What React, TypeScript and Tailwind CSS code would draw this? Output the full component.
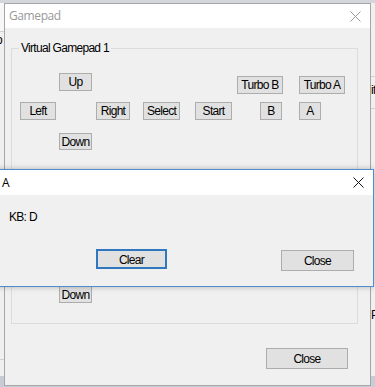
import React from 'react';

const ui = "font-['Liberation_Sans',Arial,sans-serif] text-[12px] tracking-[-0.7px] text-black";
const caption = "font-['Open_Sans','Noto_Sans',sans-serif] text-[12px] tracking-[-0.4px]";

type Pad = { label: string; x: number; y: number; w: number; h?: number };

// positions inside the group box (padding box)
const padButtons: Pad[] = [
  { label: 'Up', x: 47, y: 24, w: 33 },
  { label: 'Turbo B', x: 225, y: 27, w: 46 },
  { label: 'Turbo A', x: 287, y: 27, w: 46 },
  { label: 'Left', x: 8, y: 53, w: 36 },
  { label: 'Right', x: 84, y: 53, w: 34 },
  { label: 'Select', x: 131, y: 53, w: 37 },
  { label: 'Start', x: 183, y: 53, w: 37 },
  { label: 'B', x: 248, y: 53, w: 22 },
  { label: 'A', x: 287, y: 53, w: 22 },
  { label: 'Down', x: 47, y: 84, w: 33, h: 17 },
  { label: 'Down', x: 47, y: 237, w: 33, h: 17 },
];

function CloseX({ color }: { color: string }) {
  return (
    <svg width="11" height="11" viewBox="0 0 11 11" className="shrink-0">
      <path d="M0.5 0.5 L10.5 10.5 M10.5 0.5 L0.5 10.5" stroke={color} strokeWidth="1" fill="none" />
    </svg>
  );
}

export default function App() {
  return (
    <div className="relative w-[375px] h-[387px] overflow-hidden bg-[#f0f0f0]">
      {/* desktop behind */}
      <div className="absolute left-0 top-0 w-full h-[3px] bg-[#d3d6da]" />
      <div className="absolute left-0 top-[3px] w-[4px] h-[28px] bg-[#f7f7f7]" />
      <div className="absolute left-0 top-[31px] w-[4px] h-px bg-[#cfcfcf]" />
      <span className={`absolute left-[-4px] top-[31px] ${ui}`}>o</span>
      <div className="absolute left-0 top-[359px] w-[4px] h-px bg-[#d0d0d0]" />
      <div className="absolute left-0 top-[376px] w-full h-[11px] bg-[#c6cdd7]" />
      <div className="absolute left-[370px] top-[76px] w-[5px] h-px bg-[#d0d0d0]" />
      <div className="absolute left-[370px] top-[108px] w-[5px] h-px bg-[#d0d0d0]" />
      <span className={`absolute left-[371px] top-[81px] ${ui}`}>it</span>
      <span className={`absolute left-[371px] top-[306px] ${ui}`}>P</span>

      {/* Gamepad window (inactive) */}
      <div className="absolute left-[4px] top-[3px] w-[367px] h-[383px] border border-[#a6a6a6] bg-[#f0f0f0] flex flex-col">
        <div className="h-[24px] bg-white flex items-center justify-between pl-[4px] pr-[9px]">
          <span className={`${caption} text-[#999999]`}>Gamepad</span>
          <CloseX color="#9a9a9a" />
        </div>
        <div className="flex flex-col pt-[20px] pl-[6px] pr-[12px]">
          <div className="relative h-[276px] border border-[#dcdcdc]">
            <span className={`absolute left-[7px] top-[-8px] px-[2px] bg-[#f0f0f0] leading-[14px] ${ui}`}>
              Virtual Gamepad 1
            </span>
            {padButtons.map((b, i) => (
              <button
                key={i}
                className={`absolute flex items-center justify-center border border-[#adadad] bg-[#e1e1e1] leading-none ${ui}`}
                style={{ left: b.x, top: b.y, width: b.w, height: b.h ?? 18 }}
              >
                {b.label}
              </button>
            ))}
          </div>
          <div className="flex justify-end mt-[24px] pr-[10px]">
            <button className={`w-[82px] h-[21px] border border-[#adadad] bg-[#e1e1e1] ${ui}`}>Close</button>
          </div>
        </div>
      </div>

      {/* A dialog (active) */}
      <div className="absolute left-[-6px] top-[169px] w-[380px] h-[118px] border border-[#4d8fcc] bg-[#f0f0f0] flex flex-col shadow-[0_0_6px_rgba(0,0,0,0.25)]">
        <div className="h-[25px] bg-white flex items-center justify-between pl-[7px] pr-[9px]">
          <span className={`${caption} text-black`}>A</span>
          <CloseX color="#111111" />
        </div>
        <div className="flex flex-col pt-[15px]">
          <span className={`pl-[14px] leading-[14px] ${ui}`}>KB: D</span>
          <div className="flex items-start mt-[25px] pl-[101px] pr-[19px]">
            <button className={`w-[71px] h-[20px] border-2 border-[#2f78c0] bg-[#e1e1e1] ${ui}`}>Clear</button>
            <button className={`ml-auto mt-[1px] w-[73px] h-[21px] border border-[#adadad] bg-[#e1e1e1] ${ui}`}>Close</button>
          </div>
        </div>
      </div>
    </div>
  );
}
